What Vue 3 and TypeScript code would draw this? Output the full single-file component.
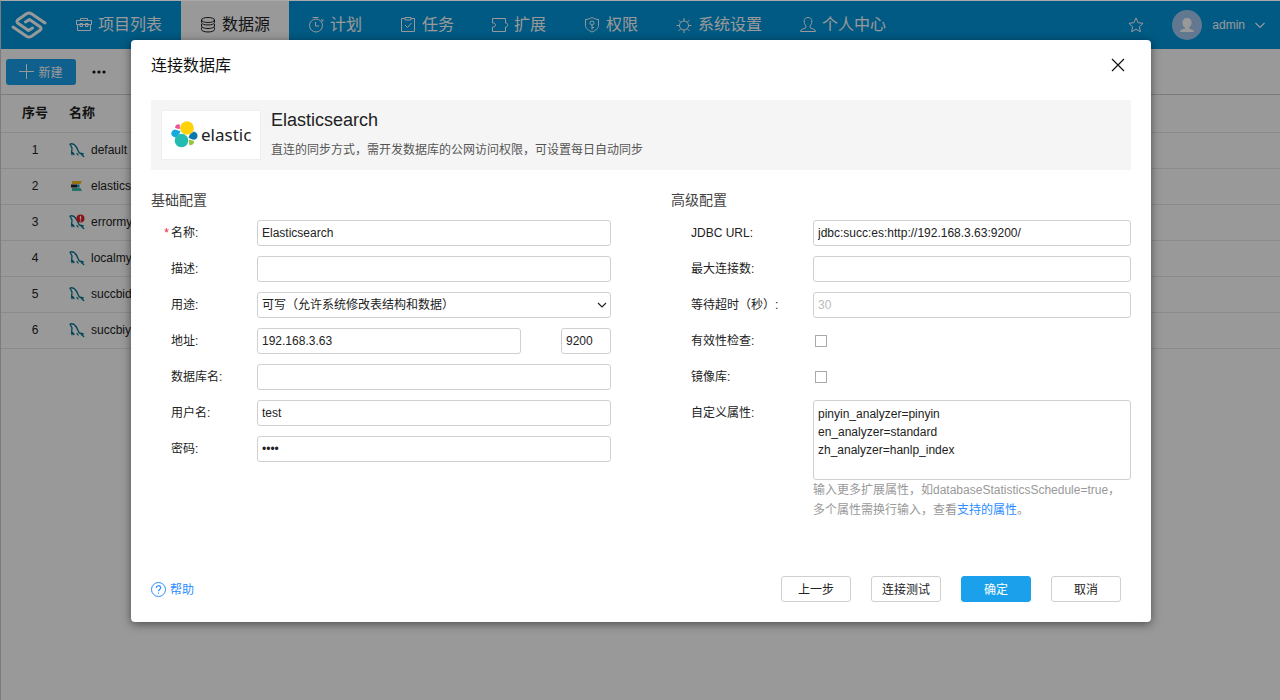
<script setup lang="ts">
import { ref } from 'vue'

interface NavItem {
  label: string
  icon: string[]
  active?: boolean
}

interface Source {
  name: string
  kind: 'mysql' | 'elastic' | 'error'
}

const navItems: NavItem[] = [
  {
    label: '项目列表',
    icon: [
      'M1.5 4.5h15v4h-15zM2.5 8.5v6h13v-6M5.5 4.5v-2h7v2M5 7.5h2.500v3H5zM10.500 7.500H13v3h-2.500z',
    ],
  },
  {
    label: '数据源',
    active: true,
    icon: [
      'M2.500 4c0-3.300 13-3.300 13 0s-13 3.300-13 0z',
      'M2.500 4v2.500c0 3.300 13 3.300 13 0V4M2.500 8v2c0 3.300 13 3.300 13 0V8M2.500 11.500v2c0 3.300 13 3.300 13 0v-2',
    ],
  },
  {
    label: '计划',
    icon: ['M15.500 9.500a6.500 6.500 0 1 1-13 0a6.500 6.500 0 1 1 13 0z', 'M5.500 1.500h6M8.500 6v4H12M14 3.500l2.500 1.500M15 5.500l1-2'],
  },
  {
    label: '任务',
    icon: ['M6 2.500H2.500v13h13v-13H12', 'M6 1.500h6v2.500H6zM6 9l2.500 2.500L12.500 7'],
  },
  {
    label: '扩展',
    icon: [
      'M1.500 7V2.500h13V7c3-.500 3 4.500 0 4v4.500h-13V11c4 .500 4-4.500 0-4z',
    ],
  },
  {
    label: '权限',
    icon: [
      'M9 1.500c2 1.200 4.500 2 6.500 2v6c0 3-3 5-6.500 6.500c-3.500-1.500-6.500-3.500-6.500-6.500v-6c2 0 4.500-.800 6.500-2z',
      'M11 7a2 2 0 1 1-4 0a2 2 0 1 1 4 0zM9 9v4.500M9 11.500h2',
    ],
  },
  {
    label: '系统设置',
    icon: [
      'M13.500 9.500a4.500 4.500 0 1 1-9 0a4.500 4.500 0 1 1 9 0z',
      'M9 5V2M9 14v3M4.500 9.500h-3M13.500 9.500h3M5.800 6.300L3.700 4.200M12.200 6.300l2.100-2.100M5.800 12.700l-2.100 2.100M12.200 12.700l2.100 2.100',
    ],
  },
  {
    label: '个人中心',
    icon: [
      'M9 1.500c-5 0-4.500 6-2 8.500v1.500c0 1-5.500 1-5.500 4h15c0-3-5.500-3-5.500-4V10c2.500-2.500 3-8.500-2-8.500z',
    ],
  },
]

const sources: Source[] = [
  { name: 'default', kind: 'mysql' },
  { name: 'elasticsearch', kind: 'elastic' },
  { name: 'errormysql', kind: 'error' },
  { name: 'localmysql', kind: 'mysql' },
  { name: 'succbidb', kind: 'mysql' },
  { name: 'succbiyun', kind: 'mysql' },
]

const name = ref('Elasticsearch')
const description = ref('')
const usage = ref('write')
const host = ref('192.168.3.63')
const port = ref('9200')
const database = ref('')
const user = ref('test')
const password = ref('test')
const jdbcUrl = ref('jdbc:succ:es:http://192.168.3.63:9200/')
const maxConnections = ref('')
const timeout = ref('')
const validate = ref(false)
const mirror = ref(false)
const properties = ref('pinyin_analyzer=pinyin\nen_analyzer=standard\nzh_analyzer=hanlp_index')
</script>

<template>
  <div class="app">
    <header class="topbar">
      <a class="brand" href="#" aria-label="首页">
        <svg width="36" height="28" viewBox="0 0 36 28" fill="none" stroke="#fff" stroke-width="3" stroke-linecap="round" stroke-linejoin="round">
          <path d="M34 12L20.500 2.800Q18 1.200 15.500 2.800L7 8.700Q4.800 10.500 7 12.300L17.500 19.500L21.500 17" />
          <path d="M2 16L15.500 25.200Q18 26.800 20.500 25.200L29 19.300Q31.200 17.500 29 15.700L18.500 8.500L14.500 11" />
        </svg>
      </a>
      <nav class="nav">
        <a v-for="item in navItems" :key="item.label" href="#" class="nav-item" :class="{ active: item.active }">
          <svg class="line-icon" width="18" height="18" viewBox="0 0 18 18">
            <path v-for="d in item.icon" :key="d" :d="d" />
          </svg>
          <span>{{ item.label }}</span>
        </a>
      </nav>
      <button class="plain star" type="button" aria-label="收藏">
        <svg class="line-icon" width="16" height="16" viewBox="0 0 16 16">
          <path d="M8 1l2.100 4.700 5 .600-3.700 3.500 1 5L8 12.300l-4.400 2.500 1-5L.900 6.300l5-.600z" />
        </svg>
      </button>
      <button class="plain account" type="button">
        <svg width="30" height="30" viewBox="0 0 30 30">
          <circle cx="15" cy="15" r="15" fill="#a3c9f0" />
          <path fill="#fff" d="M15 8c-3 0-4.600 2-4.600 4.500 0 2.200 1 4 2.400 5v1.200c-2.500.800-4.800 1-4.800 3.300h14c0-2.300-2.300-2.500-4.800-3.300v-1.200c1.400-1 2.400-2.800 2.400-5C19.600 10 18 8 15 8z" />
        </svg>
        <span>admin</span>
        <svg class="line-icon" width="10" height="10" viewBox="0 0 10 10"><path d="M.500 3L5 7.500 9.500 3" stroke-width="1.200" /></svg>
      </button>
    </header>

    <div class="toolbar">
      <button class="create" type="button">
        <svg width="15" height="15" viewBox="0 0 15 15" stroke="#fff" fill="none"><path d="M7.500 0v15M0 7.500h15" /></svg>
        <span>新建</span>
      </button>
      <button class="plain more" type="button" aria-label="更多">
        <svg width="14" height="4" viewBox="0 0 14 4" fill="#111">
          <circle cx="2" cy="2" r="1.600" /><circle cx="7" cy="2" r="1.600" /><circle cx="12" cy="2" r="1.600" />
        </svg>
      </button>
    </div>

    <table class="sources">
      <thead>
        <tr><th class="index">序号</th><th>名称</th></tr>
      </thead>
      <tbody>
        <tr v-for="(source, i) in sources" :key="source.name">
          <td class="index">{{ i + 1 }}</td>
          <td>
            <div class="source">
              <svg v-if="source.kind === 'elastic'" width="16" height="16" viewBox="0 0 16 16">
                <path fill="#f4bd19" d="M3 3h10l-1.500 3H3z" />
                <path fill="#231f20" d="M2 6.500h6v3H2z" />
                <path fill="#07a5de" d="M8 6.500h2.500v3H8z" />
                <path fill="#3ebeb0" d="M3 10h8.500L13 13H3z" />
              </svg>
              <svg v-else width="16" height="16" viewBox="0 0 16 16" fill="none" stroke="#00758f" stroke-width="1.300" stroke-linecap="round" stroke-linejoin="round">
                <path d="M5 12.500L3.500 10.500 3 12.500C1.800 9.500 3.500 8 2.800 5.500L1 2.200C3 1.200 5.500 2.500 7 4.500c1.800 2.500 2 5 3.500 6.500l3.800.800-2 .800 2.400 2" />
                <path d="M8 11.500l1 1.500" />
                <template v-if="source.kind === 'error'">
                  <circle cx="11.500" cy="4.500" r="4" fill="#e8202a" stroke="none" />
                  <path d="M11.500 2.500v2.500M11.500 6.800v.100" stroke="#fff" />
                </template>
              </svg>
              <span>{{ source.name }}</span>
            </div>
          </td>
        </tr>
      </tbody>
    </table>

    <div class="mask">
      <form class="dialog" role="dialog" aria-labelledby="dialog-title" @submit.prevent>
        <div class="dialog-head">
          <h1 id="dialog-title">连接数据库</h1>
          <button class="plain close" type="button" aria-label="关闭">
            <svg width="14" height="14" viewBox="0 0 14 14" fill="none" stroke="#111" stroke-width="1.200"><path d="M1 1l12 12M13 1L1 13" /></svg>
          </button>
        </div>

        <div class="banner">
          <div class="product">
            <svg width="27" height="28" viewBox="0 0 27 28">
              <circle cx="16" cy="7" r="6.800" fill="#fed10a" />
              <circle cx="10.500" cy="19.500" r="6.800" fill="#24bbb1" />
              <path d="M4 6.500Q4.500 3 8.500 3.200Q9.200 5.500 8.700 8Q6 8 4 6.500z" fill="#ef5098" />
              <path d="M4 8.500Q8 9.500 9.500 10.200Q9 13 4.500 16.500Q0 15.500 .300 12Q.800 9 4 8.500z" fill="#17a8e0" />
              <path d="M23 10.500Q27 12 26.500 15.500Q26 18.500 22.500 18.800Q19 18 17.500 16.500Q18.500 12.500 23 10.500z" fill="#0a78a8" />
              <path d="M18 18.500Q20.500 19 23 20Q23 24.500 18.500 24.300Q17.500 21.500 18 18.500z" fill="#93c83e" />
            </svg>
            <span>elastic</span>
          </div>
          <div class="banner-text">
            <h2>Elasticsearch</h2>
            <p>直连的同步方式，需开发数据库的公网访问权限，可设置每日自动同步</p>
          </div>
        </div>

        <div class="columns">
          <section class="basic">
            <h3>基础配置</h3>
            <div class="row">
              <label for="name"><span class="required">*</span>名称:</label>
              <input id="name" v-model="name" type="text" required />
            </div>
            <div class="row">
              <label for="description">描述:</label>
              <input id="description" v-model="description" type="text" />
            </div>
            <div class="row">
              <label for="usage">用途:</label>
              <div class="select">
                <select id="usage" v-model="usage">
                  <option value="write">可写（允许系统修改表结构和数据）</option>
                  <option value="read">只读</option>
                </select>
                <svg width="10" height="10" viewBox="0 0 10 10" fill="none" stroke="#222" stroke-width="1.200"><path d="M1 3L5 7 9 3" /></svg>
              </div>
            </div>
            <div class="row">
              <label for="host">地址:</label>
              <div class="address">
                <input id="host" v-model="host" type="text" />
                <input v-model="port" class="port" type="text" aria-label="端口" />
              </div>
            </div>
            <div class="row">
              <label for="database">数据库名:</label>
              <input id="database" v-model="database" type="text" />
            </div>
            <div class="row">
              <label for="user">用户名:</label>
              <input id="user" v-model="user" type="text" />
            </div>
            <div class="row">
              <label for="password">密码:</label>
              <input id="password" v-model="password" type="password" />
            </div>
          </section>

          <section class="advanced">
            <h3>高级配置</h3>
            <div class="row">
              <label for="jdbc">JDBC URL:</label>
              <input id="jdbc" v-model="jdbcUrl" type="text" />
            </div>
            <div class="row">
              <label for="max">最大连接数:</label>
              <input id="max" v-model="maxConnections" type="text" />
            </div>
            <div class="row">
              <label for="timeout">等待超时（秒）:</label>
              <input id="timeout" v-model="timeout" type="text" placeholder="30" />
            </div>
            <div class="row">
              <label for="validate">有效性检查:</label>
              <input id="validate" v-model="validate" type="checkbox" />
            </div>
            <div class="row">
              <label for="mirror">镜像库:</label>
              <input id="mirror" v-model="mirror" type="checkbox" />
            </div>
            <div class="row">
              <label for="properties">自定义属性:</label>
              <div class="stack">
                <textarea id="properties" v-model="properties"></textarea>
                <p class="hint">输入更多扩展属性，如databaseStatisticsSchedule=true，<br />多个属性需换行输入，查看<a href="#">支持的属性</a>。</p>
              </div>
            </div>
          </section>
        </div>

        <div class="dialog-foot">
          <a class="help" href="#">
            <svg width="15" height="15" viewBox="0 0 15 15" fill="none" stroke="currentColor">
              <circle cx="7.500" cy="7.500" r="7" />
              <path d="M5.300 6c0-3 4.400-3 4.400-.200 0 1.700-2.200 1.700-2.200 3.400M7.500 10.500v1.200" stroke-width="1.200" />
            </svg>
            <span>帮助</span>
          </a>
          <button type="button">上一步</button>
          <button type="button">连接测试</button>
          <button type="submit" class="primary">确定</button>
          <button type="button">取消</button>
        </div>
      </form>
    </div>
  </div>
</template>

<style>
body {
  margin: 0;
}
</style>

<style scoped>
* {
  box-sizing: border-box;
}

.app {
  position: relative;
  min-height: 100vh;
  border-top: 1px solid #a9a9a9;
  border-left: 1px solid #7c7c7c;
  background: #fff;
  color: #222;
  font-family: "Liberation Sans", "Noto Sans CJK SC", sans-serif;
  font-size: 12px;
  line-height: 20px;
}

button,
input,
select,
textarea {
  font: inherit;
  color: inherit;
}

a {
  color: inherit;
  text-decoration: none;
}

h1,
h2,
h3,
p {
  margin: 0;
  font-weight: normal;
}

svg {
  display: block;
  flex: none;
}

.plain {
  padding: 0;
  border: 0;
  background: none;
}

.line-icon {
  fill: none;
  stroke: currentColor;
}

.topbar {
  display: flex;
  height: 48px;
  background: #0096db;
  color: #fff;
}

.brand {
  display: flex;
  align-items: center;
  width: 56px;
  padding-left: 10px;
}

.nav {
  display: flex;
  flex: 1;
  font-size: 16px;
}

.nav-item {
  display: flex;
  align-items: center;
  gap: 5px;
  padding: 0 19px 0 18px;
  white-space: nowrap;
}

.nav-item.active {
  background: #fff;
  color: #222;
}

.star {
  margin-right: 28px;
}

.account {
  display: flex;
  align-items: center;
  gap: 10px;
  margin-right: 15px;
}

.toolbar {
  display: flex;
  align-items: center;
  gap: 16px;
  height: 46px;
  padding: 0 5px;
  border-bottom: 1px solid #cfcfcf;
}

.create {
  display: flex;
  align-items: center;
  justify-content: center;
  gap: 4px;
  width: 70px;
  height: 26px;
  padding: 0;
  border: 0;
  border-radius: 3px;
  background: #1ba1eb;
  color: #fff;
}

.create span,
.help span {
  padding-top: 2px;
}

.sources {
  width: 100%;
  border-collapse: collapse;
}

.sources th,
.sources td {
  height: 36px;
  padding: 0;
  border-bottom: 1px solid #e8e8e8;
  text-align: left;
}

.sources th {
  height: 37px;
  font-size: 13px;
  font-weight: bold;
}

.sources .index {
  width: 68px;
  text-align: center;
}

.source {
  display: flex;
  align-items: center;
  gap: 6px;
}

.mask {
  position: absolute;
  inset: 0;
  padding: 39px 129px 0 130px;
  background: rgba(0, 0, 0, 0.4);
}

.dialog {
  padding: 0 20px 20px;
  border-radius: 4px;
  background: #fff;
  box-shadow: 0 2px 10px rgba(0, 0, 0, 0.5);
}

.dialog-head {
  display: flex;
  align-items: center;
  justify-content: space-between;
  height: 50px;
  margin-bottom: 10px;
  padding-right: 6px;
}

h1 {
  padding-top: 2px;
  color: #111;
  font-size: 16px;
}

.banner {
  display: flex;
  gap: 10px;
  padding: 10px;
  background: #f5f5f5;
}

.product {
  display: flex;
  align-items: center;
  gap: 3px;
  width: 100px;
  height: 50px;
  padding-left: 9px;
  border: 1px solid #efefef;
  background: #fff;
  font-family: "Noto Sans", sans-serif;
  font-size: 17px;
}

.banner-text {
  display: flex;
  flex-direction: column;
  justify-content: space-between;
  color: #555;
}

h2 {
  color: #222;
  font-size: 18px;
}

.columns {
  display: grid;
  grid-template-columns: 1fr 1fr;
  gap: 60px;
  padding-top: 20px;
}

h3 {
  margin-bottom: 10px;
  color: #444;
  font-size: 14px;
}

.row {
  display: flex;
  margin-bottom: 10px;
  padding-left: 20px;
}

label {
  position: relative;
  flex: none;
  width: 86px;
  line-height: 26px;
}

.advanced label {
  width: 122px;
}

.required {
  position: absolute;
  right: 100%;
  padding-right: 2px;
  color: #f01a3c;
}

input,
select,
textarea {
  flex: 1;
  display: block;
  width: 100%;
  min-width: 0;
  height: 26px;
  margin: 0;
  padding: 0 4px;
  border: 1px solid #d0d0d0;
  border-radius: 3px;
  background: #fff;
  outline: none;
}

::placeholder {
  color: #bbb;
  opacity: 1;
}

.select {
  position: relative;
  flex: 1;
}

select {
  appearance: none;
}

.select svg {
  position: absolute;
  top: 8px;
  right: 4px;
  pointer-events: none;
}

.address {
  display: flex;
  flex: 1;
  gap: 40px;
}

.address .port {
  flex: none;
  width: 50px;
}

input[type="checkbox"] {
  appearance: none;
  flex: none;
  width: 12px;
  height: 12px;
  margin: 7px 2px;
  padding: 0;
  border-color: #aaa;
  border-radius: 0;
}

input[type="checkbox"]:checked {
  background: #1ba1eb;
}

.stack {
  flex: 1;
}

textarea {
  height: 80px;
  padding: 4px;
  line-height: 18px;
  resize: none;
}

.hint {
  color: #999;
  white-space: nowrap;
}

.hint a,
.help {
  color: #2a8cff;
}

.dialog-foot {
  display: flex;
  align-items: center;
  gap: 20px;
  margin-top: 46px;
  padding-right: 10px;
}

.help {
  display: flex;
  align-items: center;
  gap: 4px;
  margin-right: auto;
}

.dialog-foot button {
  width: 70px;
  height: 26px;
  padding: 2px 0 0;
  border: 1px solid #d0d0d0;
  border-radius: 3px;
  background: #fff;
}

.dialog-foot .primary {
  border-color: #1ba1eb;
  background: #1ba1eb;
  color: #fff;
}
</style>
